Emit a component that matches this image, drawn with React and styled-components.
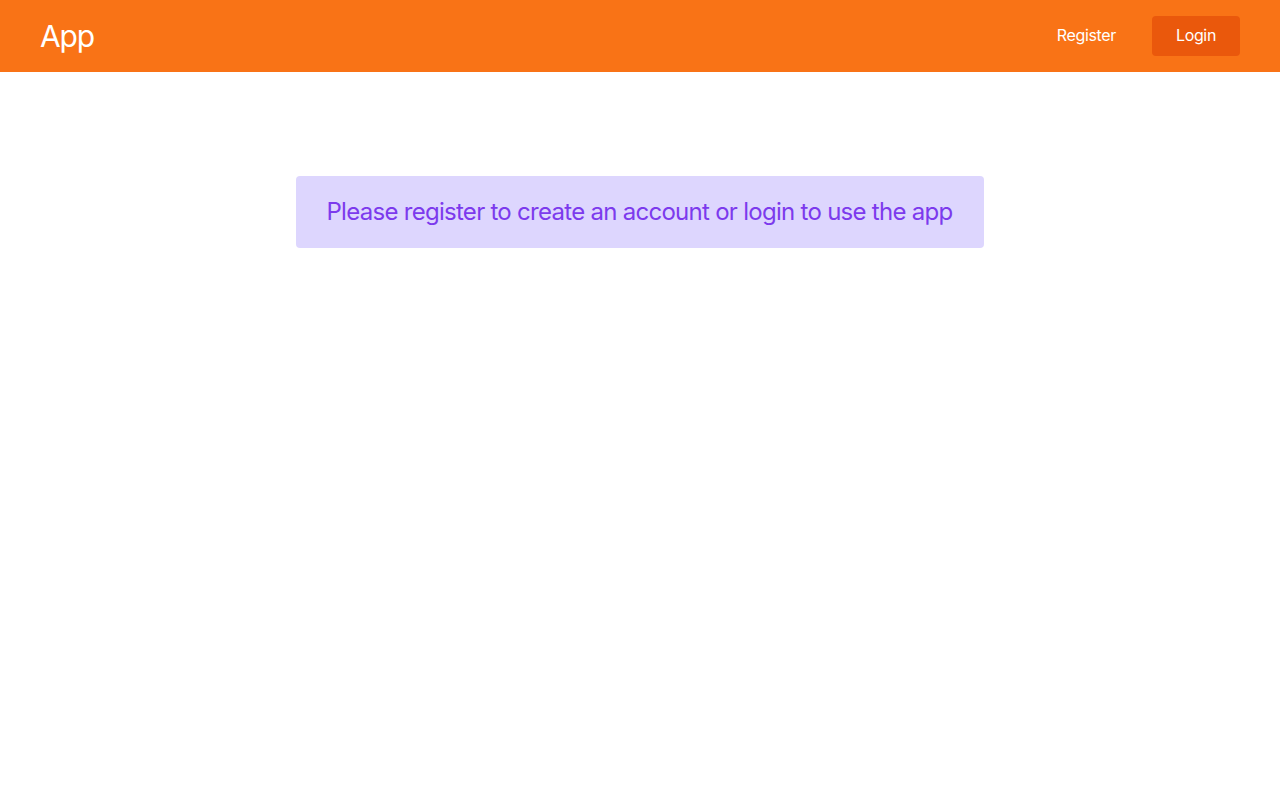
import React from 'react';
import styled, { createGlobalStyle } from 'styled-components';

const GlobalStyle = createGlobalStyle`
    body {
        margin: 0;
        font-family: Inter, "Noto Sans", sans-serif;
        background: #ffffff;
    }
`;

const Header = styled.header`
    height: 72px;
    background: #f97316;
    display: flex;
    align-items: center;
    justify-content: space-between;
    padding: 0 40px;
    box-sizing: border-box;
`;

const Brand = styled.div`
    color: #ffffff;
    font-size: 30px;
    line-height: 36px;
    letter-spacing: -1.2px;
`;

const Nav = styled.nav`
    display: flex;
    align-items: center;
    gap: 12px;
`;

const NavButton = styled.a`
    display: inline-flex;
    align-items: center;
    justify-content: center;
    height: 40px;
    padding: 0 24px 2px;
    box-sizing: border-box;
    border-radius: 4px;
    color: #ffffff;
    font-size: 16px;
    letter-spacing: -0.35px;
    text-decoration: none;
    cursor: pointer;
    background: ${props => props.primary ? '#ea580c' : 'transparent'};
`;

const Main = styled.main`
    display: flex;
    justify-content: center;
    padding-top: 104px;
`;

const Notice = styled.div`
    background: #ddd6fe;
    color: #7c3aed;
    font-size: 24px;
    line-height: 32px;
    letter-spacing: -0.72px;
    padding: 20px 32px 20px 31px;
    border-radius: 4px;
`;

export default function App() {
    return (
        <>
            <GlobalStyle />
            <Header>
                <Brand>App</Brand>
                <Nav>
                    <NavButton>Register</NavButton>
                    <NavButton primary>Login</NavButton>
                </Nav>
            </Header>
            <Main>
                <Notice>Please register to create an account or login to use the app</Notice>
            </Main>
        </>
    );
}
